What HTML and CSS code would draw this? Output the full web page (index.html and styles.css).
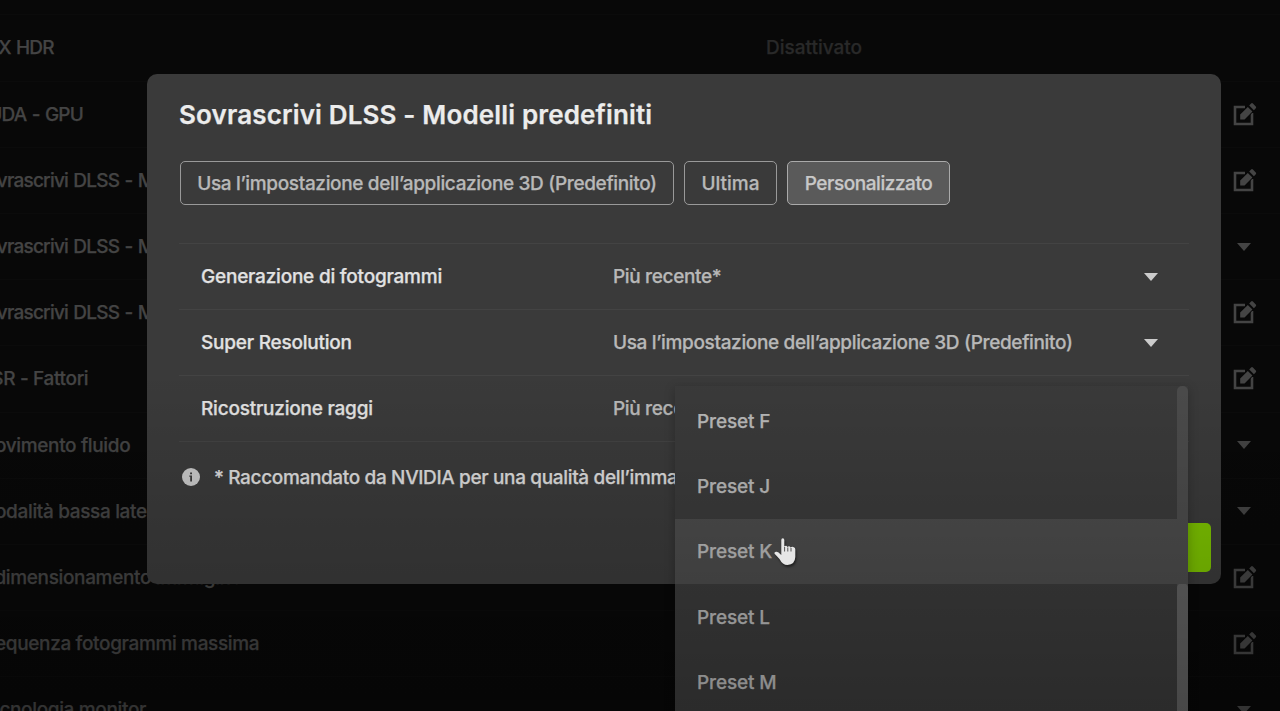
FILE: index.html
```html
<!DOCTYPE html>
<html lang="it">
<head>
    <meta charset="UTF-8">
    <meta name="viewport" content="width=device-width, initial-scale=1.0">
    <title>Impostazioni grafica</title>
    <link rel="stylesheet" href="styles.css">
</head>
<body>
    <svg class="symbols" width="0" height="0">
        <symbol id="edit" viewBox="0 0 24 24">
            <path d="M12 5H2V22H19V11" fill="none" stroke="currentColor" stroke-width="2.6"/>
            <path d="M7.2 17.6V12.6L14.8 5L19.4 9.6L11.6 17.6Z" fill="currentColor" stroke="#080808" stroke-width="1.6" paint-order="stroke"/>
            <path d="M16.2 3.6L18.1 1.5Q19 .6 19.9 1.5L22.8 4.4Q23.6 5.3 22.8 6.2L20.9 8.3Z" fill="currentColor"/>
        </symbol>
        <symbol id="arrow" viewBox="0 0 14 8">
            <path d="M0 0H14L7 8Z" fill="currentColor"/>
        </symbol>
    </svg>

    <div class="settings">
        <div class="setting"><span class="name caps">RTX HDR</span><span class="value">Disattivato</span></div>
        <div class="setting"><span class="name caps">CUDA - GPU</span><svg class="edit"><use href="#edit"/></svg></div>
        <div class="setting"><span class="name caps">Sovrascrivi DLSS - Modalità</span><svg class="edit"><use href="#edit"/></svg></div>
        <div class="setting"><span class="name caps">Sovrascrivi DLSS - Modalità</span><svg class="arrow"><use href="#arrow"/></svg></div>
        <div class="setting"><span class="name caps">Sovrascrivi DLSS - Modelli</span><svg class="edit"><use href="#edit"/></svg></div>
        <div class="setting"><span class="name">DSR - Fattori</span><svg class="edit"><use href="#edit"/></svg></div>
        <div class="setting"><span class="name">Movimento fluido</span><svg class="arrow"><use href="#arrow"/></svg></div>
        <div class="setting"><span class="name">Modalità bassa latenza</span><svg class="arrow"><use href="#arrow"/></svg></div>
        <div class="setting"><span class="name">Ridimensionamento immagine</span><svg class="edit"><use href="#edit"/></svg></div>
        <div class="setting"><span class="name">Frequenza fotogrammi massima</span><svg class="edit"><use href="#edit"/></svg></div>
        <div class="setting"><span class="name">Tecnologia monitor</span><svg class="arrow"><use href="#arrow"/></svg></div>
    </div>

    <div class="dialog">
        <h1>Sovrascrivi DLSS - Modelli predefiniti</h1>
        <div class="tabs">
            <button class="tab tab-default">Usa l’impostazione dell’applicazione 3D (Predefinito)</button>
            <button class="tab tab-latest">Ultima</button>
            <button class="tab tab-custom active">Personalizzato</button>
        </div>
        <div class="models">
            <div class="model">
                <span class="model-name">Generazione di fotogrammi</span>
                <span class="model-value">Più recente*</span>
                <svg class="arrow"><use href="#arrow"/></svg>
            </div>
            <div class="model">
                <span class="model-name">Super Resolution</span>
                <span class="model-value">Usa l’impostazione dell’applicazione 3D (Predefinito)</span>
                <svg class="arrow"><use href="#arrow"/></svg>
            </div>
            <div class="model">
                <span class="model-name">Ricostruzione raggi</span>
                <span class="model-value">Più recente*</span>
                <svg class="arrow"><use href="#arrow"/></svg>
            </div>
        </div>
        <div class="note">
            <svg class="info" viewBox="0 0 18 18">
                <circle cx="9" cy="9" r="9" fill="#c8c8c8"/>
                <path d="M8.1 4.4H10V6.3H8.1ZM7.3 7.6H10V13.5H8.2V8.8H7.3Z" fill="#3a3a3a"/>
            </svg>
            <span>* Raccomandato da NVIDIA per una qualità dell’immagine</span>
        </div>
        <div class="actions"><button class="apply"></button></div>
    </div>

    <div class="dropdown">
        <div class="option">Preset F</div>
        <div class="option">Preset J</div>
        <div class="option hover">Preset K</div>
        <div class="option">Preset L</div>
        <div class="option">Preset M</div>
        <div class="scrollbar"><div class="thumb"></div></div>
    </div>

    <div class="shade"></div>

    <svg class="cursor" viewBox="0 0 22 28">
        <path d="M7.3 2Q7.3.3 8.8.3Q10.3.3 10.3 2V8.5Q12.5 7 13.3 9Q15.5 7.3 16.5 9.5Q18.5 8 19.8 9.3Q21.3 9.5 21.3 11.5V19Q21 26.5 13.5 27Q8.5 27 5.5 21L.6 15.8Q-.1 14.2 2 13.7Q4 13.3 7.3 17Z" fill="#e6e6e6"/>
        <path d="M10.6 9V13.5M13.8 9.5V13.5M17 10V13.5" stroke="#555" stroke-width="1" fill="none"/>
    </svg>
</body>
</html>
```
FILE: styles.css
```css
* {
    box-sizing: border-box;
}
body {
    margin: 0;
    width: 1280px;
    height: 711px;
    position: relative;
    overflow: hidden;
    background-color: #080808;
    font-family: Inter, sans-serif;
    font-size: 19px;
    font-weight: 500;
    letter-spacing: -0.35px;
    -webkit-text-stroke: 0.25px currentColor;
    color: #b8b8b8;
}
button {
    font: inherit;
    letter-spacing: inherit;
    color: inherit;
}
svg {
    flex: none;
}
.symbols {
    display: block;
    height: 0;
}
.arrow {
    width: 14px;
    height: 8px;
}

/* settings list behind the dialog */
.settings {
    padding-top: 14.4px;
    color: #444;
}
.setting {
    display: flex;
    align-items: center;
    height: 66.2px;
    padding-right: 24px;
    border-top: 1px solid #0b0b0b;
    white-space: nowrap;
}
.setting .name {
    width: 788px;
    margin-left: -22px;
}
.setting .caps {
    width: 791px;
    margin-left: -25px;
    letter-spacing: -0.78px;
    word-spacing: 1px;
}
.setting .value {
    letter-spacing: 0;
    color: #292929;
}
.setting svg {
    margin-left: auto;
}
.setting .arrow {
    margin-right: 5px;
}
.setting .edit {
    width: 24px;
    height: 24px;
    margin: 0 -1px 1px auto;
}

.dialog {
    position: absolute;
    left: 147px;
    top: 74px;
    width: 1074px;
    height: 510px;
    padding: 0 32px;
    border-radius: 10px;
    background-color: #3a3a3a;
    white-space: nowrap;
}
.dialog h1 {
    margin: 22px 0 28px;
    line-height: 37px;
    font-size: 26px;
    font-weight: 600;
    letter-spacing: 0.15px;
    color: #ececec;
}
.tabs {
    display: flex;
    gap: 10px;
    margin-left: 1px;
}
.tab {
    height: 44px;
    padding: 0;
    border: 1.5px solid #999;
    border-radius: 5px;
    background: none;
}
.tab-default {
    width: 494px;
}
.tab-latest {
    width: 93px;
    letter-spacing: 0;
}
.tab-custom {
    width: 163px;
    letter-spacing: -0.45px;
}
.tab.active {
    background-color: #5a5a5a;
    border-color: #aaa;
    color: #c8c8c8;
}
.models {
    margin-top: 37.5px;
    border-bottom: 1px solid #434343;
}
.model {
    display: flex;
    align-items: center;
    height: 66.2px;
    padding: 1px 31px 0 22px;
    border-top: 1px solid #434343;
}
.model-name {
    width: 412px;
    letter-spacing: -0.22px;
    color: #e2e2e2;
}
.model .arrow {
    margin-left: auto;
    color: #ccc;
}
.note {
    display: flex;
    align-items: center;
    gap: 14px;
    height: 70px;
    padding-left: 3px;
    color: #dcdcdc;
}
.info {
    width: 18px;
    height: 18px;
}
.actions {
    display: flex;
    justify-content: flex-end;
    margin: 11px -22px 0 0;
}
.apply {
    width: 120px;
    height: 49px;
    border: 0;
    border-radius: 5px;
    background-color: #7cc200;
}

.dropdown {
    position: absolute;
    isolation: isolate;
    left: 675px;
    top: 386px;
    width: 513px;
    height: 340px;
    padding-top: 2px;
    background-color: #3a3a3a;
    box-shadow: 0 3px 10px rgba(0, 0, 0, 0.25);
    letter-spacing: -0.13px;
}
.option {
    position: relative;
    display: flex;
    align-items: center;
    height: 65.3px;
    padding-top: 1px;
    padding-left: 22px;
}
.option.hover {
    z-index: 1;
    background-color: #4b4b4b;
}
.scrollbar {
    position: absolute;
    top: 0;
    right: 0;
    width: 11px;
    height: 340px;
    padding-top: 197px;
    border-radius: 5px 5px 0 0;
    background-color: #4b4b4b;
}
.thumb {
    height: 143px;
    border-radius: 5px 5px 0 0;
    background-color: #606060;
}

/* screen gets darker towards the bottom */
.shade {
    position: absolute;
    inset: 0;
    background: linear-gradient(transparent 370px, rgba(0, 0, 0, 0.26));
    pointer-events: none;
}
.cursor {
    position: absolute;
    left: 774px;
    top: 538px;
    width: 22px;
    height: 28px;
    filter: drop-shadow(1px 2px 1px rgba(0, 0, 0, 0.5));
}
```
